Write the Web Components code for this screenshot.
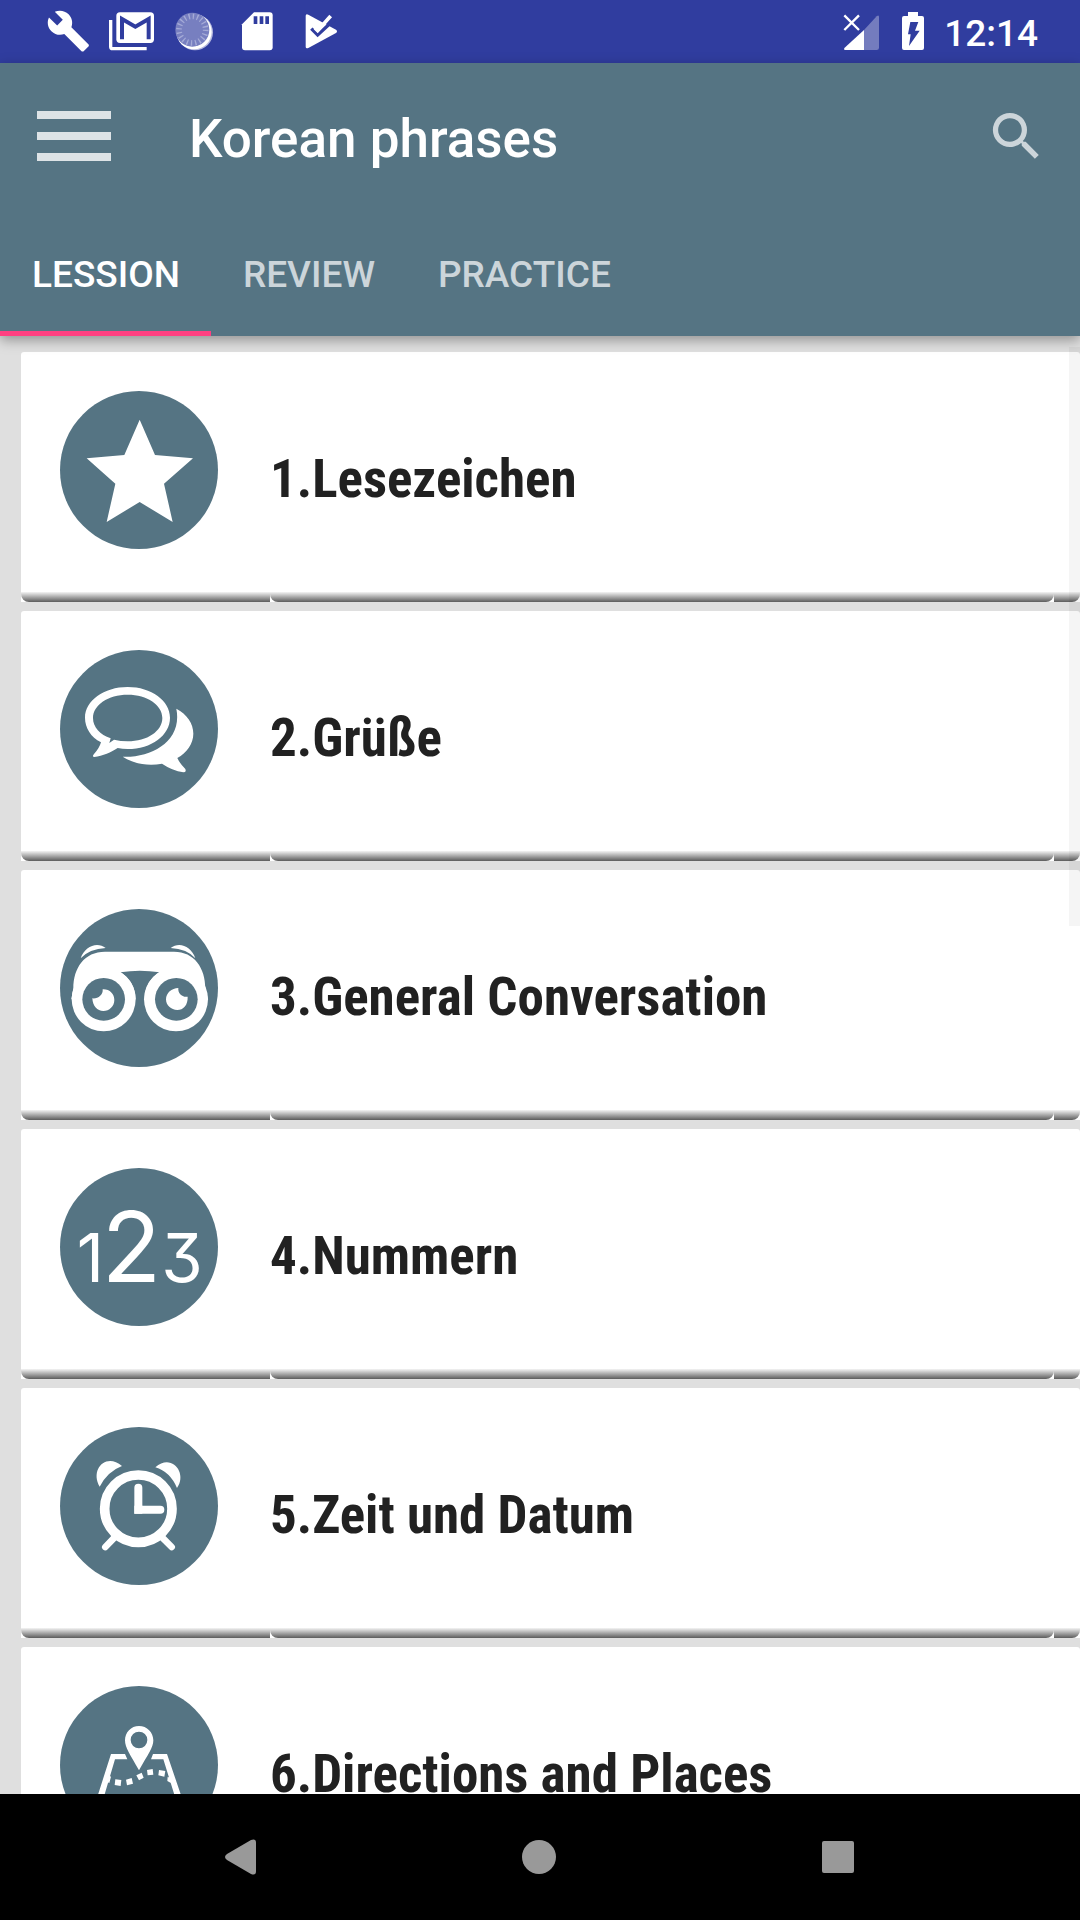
<!DOCTYPE html>
<html lang="de">
<head>
<meta charset="utf-8">
<meta name="viewport" content="width=device-width, initial-scale=1">
<title>Korean phrases</title>
<style>
	body {
		margin: 0;
		height: 100vh;
		background: #dfdfdf;
		font-family: Roboto, "Liberation Sans", sans-serif;
		--slate: #557483;
		--indigo: #303d9f;
		--accent: #ff4081;
	}
</style>
</head>
<body>
<phrase-app></phrase-app>

<script>
class StatusBar extends HTMLElement {
	constructor() {
		super();
		this.attachShadow({mode:'open'});
		this.shadowRoot.innerHTML = this.template;
	}

	get template() {
		return `
			<style>
			:host { display: flex; align-items: center; justify-content: space-between; height: 63px; padding: 0 42px 0 37px; background: var(--indigo); color: #fff; }
			div { display: flex; align-items: center; }
			.system { gap: 17px; }
			svg { display: block; height: 63px; fill: #fff; }
			.cut { fill: var(--indigo); }
			.line { fill: none; stroke: #fff; }
			.cutline { fill: none; stroke: var(--indigo); }
			time { font-size: 37px; font-weight: 500; line-height: 44px; padding-top: 4px; }
			</style>
			<div>
				<svg width="63" viewBox="111 0 189 189"><path transform="translate(138 26) scale(5.6)" d="M22.7 19l-9.1-9.1c.9-2.3.4-5-1.5-6.9-2-2-5-2.4-7.4-1.3L9 6 6 9 1.6 4.7C.4 7.1.9 10.1 2.9 12.1c1.9 1.9 4.6 2.4 6.9 1.5l9.1 9.1c.4.4 1 .4 1.4 0l2.3-2.3c.5-.4.5-1.1.1-1.4z"/></svg>
				<svg width="63" viewBox="300 0 189 189">
					<path class="line" stroke-width="10" d="M332 60V140Q332 146 338 146H440"/>
					<rect x="349" y="37" width="113" height="92" rx="11"/>
					<path class="cutline" stroke-width="12" d="M366 118V57L406 80L446 57V118"/>
				</svg>
				<svg width="63" viewBox="489 0 189 189">
					<circle cx="585" cy="97" r="54" fill="#b5b9df"/>
					<circle cx="582" cy="95" r="53"/>
					<circle cx="577" cy="89" r="51" fill="#777fc0"/>
					<circle cx="577" cy="89" r="40" fill="none" stroke="#a5abd7" stroke-width="17" stroke-dasharray="4 8.57"/>
				</svg>
				<svg width="63" viewBox="678 0 189 189">
					<path d="M762 37H809Q818 37 818 46V142Q818 151 809 151H735Q726 151 726 142V73Z"/>
					<path class="cut" d="M761 49h11v23h-11zM779 49h11v23h-11zM796 49h11v23h-11z"/>
				</svg>
				<svg width="63" viewBox="867 0 189 189">
					<path d="M917 48Q917 40 925 44L1008 89Q1014 94 1008 99L925 144Q917 147 917 140Z"/>
					<path class="cutline" stroke-width="10" d="M934 86L953 105L1004 58"/>
					<path class="line" stroke-width="11" d="M945 84L953 92L992 48"/>
				</svg>
			</div>
			<div class="system">
				<svg width="42" viewBox="180 0 126 189">
					<path opacity=".33" d="M252 90L290 49Q297 43 297 51V143Q297 150 290 150H252Z"/>
					<path d="M252 90V150H196Q189 149 194 143Z"/>
					<path class="line" stroke-width="7" d="M193 46L237 90M237 46L193 90"/>
				</svg>
				<svg width="28" viewBox="357 0 84 189">
					<path d="M384 36H414V48H426Q432 48 432 54V144Q432 150 426 150H372Q366 150 366 144V54Q366 48 372 48H384Z"/>
					<path class="cut" d="M391 66H415L405 92H419L387 138L392 103H384Z"/>
				</svg>
				<time><slot></slot></time>
			</div>
		`;
	}
}

class AppBar extends HTMLElement {
	constructor() {
		super();
		this.attachShadow({mode:'open'});
		this.shadowRoot.innerHTML = this.template;
	}

	get template() {
		return `
			<style>
			:host { display: flex; align-items: center; height: 147px; padding: 0 32px 0 37px; box-sizing: border-box; background: var(--slate); color: #fff; }
			button { border: 0; padding: 0; background: none; cursor: pointer; }
			svg { display: block; }
			h1 { flex: 1; margin: 0 0 0 78px; padding-top: 4px; font-size: 53px; line-height: 60px; font-weight: 500; }
			</style>
			<button aria-label="Menu"><svg width="74" height="51" fill="#dde3e6"><path d="M0 0h74v8H0zM0 21h74v8H0zM0 42h74v8H0z"/></svg></button>
			<h1><slot></slot></h1>
			<button aria-label="Search"><svg width="63" height="63" viewBox="0 0 24 24" fill="#ccd5da"><path d="M15.5 14h-.79l-.28-.27A6.47 6.47 0 0 0 16 9.5 6.5 6.5 0 1 0 9.5 16c1.61 0 3.09-.59 4.23-1.57l.27.28v.79l5 4.99L20.49 19l-4.99-5zm-6 0C7.01 14 5 11.99 5 9.5S7.01 5 9.5 5 14 7.01 14 9.5 11.99 14 9.5 14z"/></svg></button>
		`;
	}
}

class TabBar extends HTMLElement {
	constructor() {
		super();
		this.attachShadow({mode:'open'});
		this.shadowRoot.innerHTML = this.template;
		const tabs = this.shadowRoot.querySelectorAll('button');
		for (const tab of tabs) {
			tab.addEventListener('click', () => {
				for (const other of tabs) {
					other.setAttribute('aria-selected', other === tab);
				}
			});
		}
	}

	get template() {
		return `
			<style>
			:host { display: flex; height: 126px; background: var(--slate); }
			button { border: 0; border-bottom: 5px solid transparent; padding: 8px 31px 0 32px; background: none; color: #ccd5da; font: 500 37px/44px Roboto, "Liberation Sans", sans-serif; cursor: pointer; }
			button[aria-selected="true"] { color: #fff; border-color: var(--accent); }
			</style>
			<button role="tab" aria-selected="true">LESSION</button>
			<button role="tab" aria-selected="false">REVIEW</button>
			<button role="tab" aria-selected="false">PRACTICE</button>
		`;
	}
}

const lessonIcons = {
	star: ['180 153', '<path d="M419 239L465 345L579 355L492 431L518 546L419 486L320 546L346 431L260 355L373 345Z"/>'],
	chat: ['30 30', `
		<path fill-rule="evenodd" d="M233 141C304 141 360 182 360 233C360 286 304 327 233 327Q217 327 203 324C184 337 158 348 133 351Q125 350 132 342Q148 325 153 307C122 291 105 263 105 233C105 182 162 141 233 141ZM233 164C174 164 129 195 129 234C129 262 150 284 182 295L178 309L192 299Q212 304 233 304C292 304 337 273 337 234C337 195 292 164 233 164Z"/>
		<path d="M379 206C411 223 430 250 430 281C430 311 410 338 382 354Q389 370 406 387Q410 397 400 397Q367 392 336 371C291 379 248 370 218 350C305 354 398 303 379 206Z"/>`],
	binoculars: ['30 27', `
		<path d="M70 265C70 204 103 155 165 155H372C433 155 466 204 466 265L474 297H284C284 263 301 233 329 217Q269 207 211 217C239 233 257 263 257 297H64Z"/>
		<circle cx="161" cy="298" r="96"/><circle cx="378" cy="298" r="96"/>
		<circle class="cut" cx="161" cy="298" r="64"/><circle class="cut" cx="379" cy="298" r="64"/>
		<path d="M158 268C179 267 193 282 193 300C193 319 178 333 160 333C142 333 128 319 127 295C143 297 160 286 158 268ZM385 264C365 264 348 279 348 298C348 316 363 330 382 330C400 330 414 315 413 290C397 293 383 280 385 264Z"/>
		<path d="M92 175C104 137 143 124 167 144Q119 146 92 175ZM436 175C424 137 386 124 362 144Q410 146 436 175Z"/>`],
	numbers: ['30 24', `
		<text x="80" y="366" font-size="201">1</text>
		<text x="155" y="366" font-size="292">2</text>
		<text x="334" y="366" font-size="201">3</text>`],
	clock: ['30 21', `
		<circle class="line" cx="265" cy="266" r="101" stroke-width="29"/>
		<path class="line" stroke-width="24" stroke-linecap="round" d="M265 203V269H331"/>
		<path d="M253 257h24v24h-24z"/>
		<path class="line" stroke-width="20" stroke-linecap="round" d="M196 350L166 381M334 350L365 381"/>
		<path d="M149 200C119 147 169 97 216 138Q173 154 149 200ZM381 204C413 160 365 98 316 142Q360 155 381 204Z"/>`],
	map: ['180 198', `
		<path fill-rule="evenodd" d="M417 318C441 318 460 337 460 361C460 383 444 403 417 451C390 403 375 383 375 361C375 337 393 318 417 318ZM417 335A25 25 0 1 0 417 385A25 25 0 1 0 417 335Z"/>
		<path d="M333 402H375L382 418H345L308 543H288ZM459 402H501L549 543H529L490 418H453ZM321 463L333 470L328 489L316 484ZM503 470L519 479L518 492L502 483Z"/>
		<path d="M346 478l18 2-2 18-18-3zM378 479l17-5 4 17-18 5zM409 466l16-8 6 15-14 8zM441 450l17-3 2 17-17 2zM477 450l19 3-3 17-18-4z"/>`]
};

class LessonCard extends HTMLElement {
	constructor() {
		super();
		this.attachShadow({mode:'open'});
		this.shadowRoot.innerHTML = this.template;
	}

	get template() {
		const [origin, shape] = lessonIcons[this.getAttribute('icon')];
		return `
			<style>
			:host { display: block; }
			a { display: flex; height: 250px; border-radius: 3px 3px 0 0; background: #fff; color: #212121; text-decoration: none; overflow: hidden; }
			.cell { box-sizing: border-box; border-radius: 0 0 8px 8px; background: linear-gradient(#f4f4f4, #5c5c5c) bottom / 100% 10px no-repeat; }
			.picture { width: 249px; padding: 39px 0 0 39px; border-bottom-right-radius: 0; }
			.name { flex: 1; display: flex; align-items: center; padding-top: 4px; }
			.edge { width: 26px; border-bottom-left-radius: 0; }
			svg { display: block; border-radius: 50%; background: var(--slate); fill: #fff; }
			.cut { fill: var(--slate); }
			.line { fill: none; stroke: #fff; }
			text { font-family: Inter, sans-serif; font-weight: 400; font-feature-settings: "cv09"; }
			.name span { font: 700 53px/64px "Roboto Condensed", "Liberation Sans Narrow", Roboto, sans-serif; white-space: nowrap; }
			</style>
			<a href="#lesson">
				<span class="cell picture"><svg width="158" height="158" viewBox="${origin} 474 474" aria-hidden="true">${shape}</svg></span>
				<span class="cell name"><span><slot></slot></span></span>
				<span class="cell edge"></span>
			</a>
		`;
	}
}

class LessonList extends HTMLElement {
	constructor() {
		super();
		this.attachShadow({mode:'open'});
		this.shadowRoot.innerHTML = this.template;
	}

	get template() {
		return `
			<style>
			:host { display: block; position: relative; overflow: hidden; }
			.items { display: flex; flex-direction: column; gap: 9px; padding: 5px 0 0 21px; }
			.thumb { position: absolute; top: 0; right: 0; width: 11px; height: 40%; background: rgba(0, 0, 0, .04); }
			</style>
			<div class="items"><slot></slot></div>
			<div class="thumb"></div>
		`;
	}
}

class NavBar extends HTMLElement {
	constructor() {
		super();
		this.attachShadow({mode:'open'});
		this.shadowRoot.innerHTML = this.template;
	}

	get template() {
		return `
			<style>
			:host { display: flex; height: 126px; padding: 0 93px 0 91px; background: #000; }
			button { flex: 1; display: flex; align-items: center; justify-content: center; border: 0; padding: 0; background: none; cursor: pointer; }
			svg { fill: #999; }
			</style>
			<button aria-label="Back"><svg width="36" height="36"><path d="M29 1Q34-1 34 4V32Q34 37 29 35L5 21Q1 18 5 15Z"/></svg></button>
			<button aria-label="Home"><svg width="36" height="36"><circle cx="18" cy="18" r="17"/></svg></button>
			<button aria-label="Overview"><svg width="36" height="36"><rect x="2" y="2" width="32" height="32" rx="2"/></svg></button>
		`;
	}
}

class PhraseApp extends HTMLElement {
	constructor() {
		super();
		this.attachShadow({mode:'open'});
		this.shadowRoot.innerHTML = this.template;
	}

	get template() {
		return `
			<style>
			:host { display: flex; flex-direction: column; height: 100%; }
			header { position: relative; z-index: 1; box-shadow: 0 4px 12px rgba(0, 0, 0, .35); }
			main { flex: 1; min-height: 0; display: flex; flex-direction: column; padding-top: 11px; }
			lesson-list { flex: 1; }
			</style>
			<status-bar>12:14</status-bar>
			<header>
				<app-bar>Korean phrases</app-bar>
				<tab-bar role="tablist"></tab-bar>
			</header>
			<main>
				<lesson-list>
					<lesson-card icon="star">1.Lesezeichen</lesson-card>
					<lesson-card icon="chat">2.Grüße</lesson-card>
					<lesson-card icon="binoculars">3.General Conversation</lesson-card>
					<lesson-card icon="numbers">4.Nummern</lesson-card>
					<lesson-card icon="clock">5.Zeit und Datum</lesson-card>
					<lesson-card icon="map">6.Directions and Places</lesson-card>
				</lesson-list>
			</main>
			<nav-bar></nav-bar>
		`;
	}
}

window.customElements.define('status-bar', StatusBar);
window.customElements.define('app-bar', AppBar);
window.customElements.define('tab-bar', TabBar);
window.customElements.define('lesson-card', LessonCard);
window.customElements.define('lesson-list', LessonList);
window.customElements.define('nav-bar', NavBar);
window.customElements.define('phrase-app', PhraseApp);
</script>
</body>
</html>
